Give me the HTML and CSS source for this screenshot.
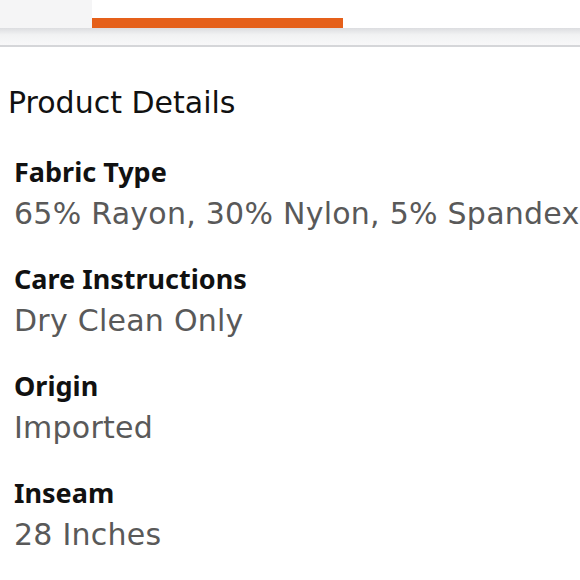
FILE: index.html
```html
<!DOCTYPE html>
<html>
<head>
<meta charset="utf-8">
<link rel="stylesheet" href="styles.css">
</head>
<body>
<div class="tabs">
  <div class="tab tab-first"></div>
  <div class="tab tab-active"></div>
  <div class="tab tab-rest"></div>
</div>
<div class="shadow"></div>
<main class="details">
  <h1 class="title">Product Details</h1>
  <div class="item">
    <div class="label">Fabric Type</div>
    <div class="value">65% Rayon, 30% Nylon, 5% Spandex</div>
  </div>
  <div class="item">
    <div class="label">Care Instructions</div>
    <div class="value">Dry Clean Only</div>
  </div>
  <div class="item">
    <div class="label">Origin</div>
    <div class="value">Imported</div>
  </div>
  <div class="item">
    <div class="label">Inseam</div>
    <div class="value">28 Inches</div>
  </div>
</main>
</body>
</html>
```
FILE: styles.css
```css
html, body {
  margin: 0;
  padding: 0;
  background: #ffffff;
  width: 580px;
  overflow: hidden;
}
body {
  font-family: "DejaVu Sans", "Noto Sans", sans-serif;
}
.tabs {
  display: flex;
  height: 28px;
}
.tab-first {
  width: 92px;
  background: #f5f5f6;
}
.tab-active {
  width: 251px;
  background: #ffffff;
  display: flex;
  flex-direction: column;
  justify-content: flex-end;
}
.tab-active::after {
  content: "";
  display: block;
  height: 10px;
  background: #e5601a;
}
.tab-rest {
  flex: 1;
}
.shadow {
  height: 17px;
  background: linear-gradient(#dcdde0, #f1f2f3 40%, #f8f8f9);
  border-bottom: 2px solid #d5d6d9;
}
.details {
  padding: 0 0 0 14px;
}
.title {
  margin: 36px 0 0 -6px;
  font-family: "DejaVu Sans", sans-serif;
  font-size: 30px;
  font-weight: 400;
  color: #111111;
  line-height: 40px;
}
.item {
  margin-top: 22px;
}
.item:first-of-type {
  margin-top: 29px;
}
.label {
  font-family: "Noto Sans", sans-serif;
  font-size: 27px;
  font-weight: 700;
  color: #111111;
  line-height: 39px;
}
.value {
  font-family: "DejaVu Sans", sans-serif;
  font-size: 30px;
  letter-spacing: 0.25px;
  color: #595959;
  line-height: 46px;
  white-space: nowrap;
}
```
